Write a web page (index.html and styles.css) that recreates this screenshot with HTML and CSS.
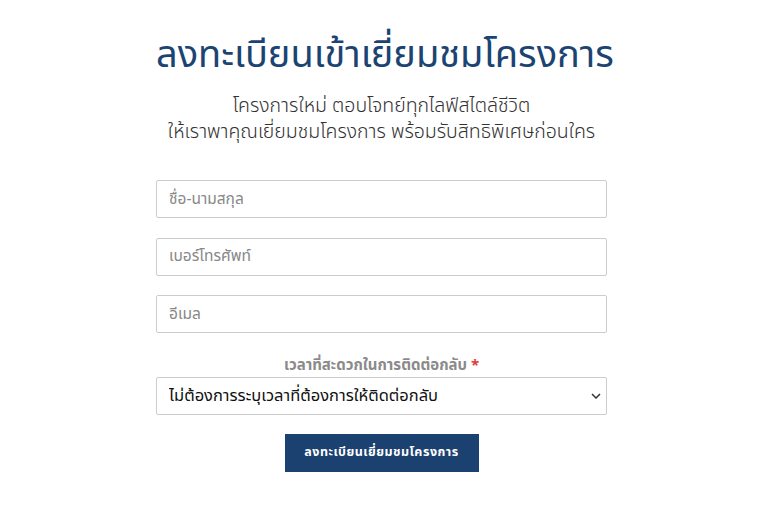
FILE: index.html
```html
<!DOCTYPE html>
<html>

<head>
    <meta charset="UTF-8">
    <title>ลงทะเบียนเข้าเยี่ยมชมโครงการ</title>
    <link rel="stylesheet" href="styles.css">
</head>

<body>
    <div class="register">
        <h1 class="register-title">ลงทะเบียนเข้าเยี่ยมชมโครงการ</h1>
        <p class="register-desc">โครงการใหม่ ตอบโจทย์ทุกไลฟ์สไตล์ชีวิต<br>ให้เราพาคุณเยี่ยมชมโครงการ พร้อมรับสิทธิพิเศษก่อนใคร</p>
        <form class="register-form">
            <input class="register-input" type="text" placeholder="ชื่อ-นามสกุล">
            <input class="register-input" type="tel" placeholder="เบอร์โทรศัพท์">
            <input class="register-input" type="email" placeholder="อีเมล">
            <label class="register-label">เวลาที่สะดวกในการติดต่อกลับ <span>*</span></label>
            <div class="register-select">
                <select>
                    <option>ไม่ต้องการระบุเวลาที่ต้องการให้ติดต่อกลับ</option>
                    <option>09:00 - 12:00</option>
                    <option>13:00 - 17:00</option>
                </select>
                <svg width="10" height="6" viewBox="0 0 10 6">
                    <path d="M1 1l4 4 4-4" fill="none" stroke="#333" stroke-width="1.5"/>
                </svg>
            </div>
            <input class="register-btn" type="button" value="ลงทะเบียนเยี่ยมชมโครงการ">
        </form>
    </div>
</body>

</html>
```

FILE: styles.css
```css
* {
    margin: 0;
    padding: 0;
    box-sizing: border-box;
}

body {
    font-family: "Noto Sans Thai", "Noto Sans", "DejaVu Sans", sans-serif;
    color: #333;
    background-color: #fff;
}

.register {
    width: 451px;
    margin-left: 156px;
    padding-top: 32px;
}

.register-title {
    font-size: 38px;
    font-weight: 400;
    line-height: 48px;
    color: #1b4472;
    text-align: center;
    white-space: nowrap;
}

.register-desc {
    margin-top: 13px;
    font-size: 19.5px;
    font-weight: 300;
    line-height: 26px;
    color: #333;
    text-align: center;
    white-space: nowrap;
}

.register-form {
    display: flex;
    flex-direction: column;
    align-items: center;
    margin-top: 35px;
}

.register-input {
    width: 100%;
    height: 38px;
    padding: 0 12px;
    margin-bottom: 19.5px;
    border: 1px solid #ccc;
    border-radius: 2px;
    font-family: inherit;
    font-size: 15.5px;
    color: #333;
    outline: none;
}

.register-input::placeholder {
    color: #888;
}

.register-label {
    margin-top: 2px;
    font-size: 15px;
    font-weight: 700;
    line-height: 22px;
    color: #8a8a8a;
}

.register-label span {
    color: #e53935;
}

.register-select {
    position: relative;
    width: 100%;
}

.register-select select {
    width: 100%;
    height: 38px;
    padding: 0 12px;
    border: 1px solid #ccc;
    border-radius: 2px;
    background-color: #fff;
    font-family: inherit;
    font-size: 16.5px;
    font-weight: 400;
    color: #111;
    outline: none;
    appearance: none;
}

.register-select svg {
    position: absolute;
    right: 6px;
    top: 16px;
}

.register-btn {
    width: 194px;
    height: 38px;
    margin-top: 19px;
    border: 0 none;
    background-color: #1b4170;
    color: #fff;
    font-family: inherit;
    font-size: 12.5px;
    font-weight: 700;
    letter-spacing: 0.5px;
    cursor: pointer;
}
```
